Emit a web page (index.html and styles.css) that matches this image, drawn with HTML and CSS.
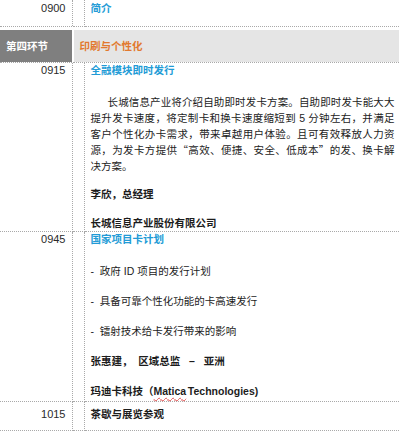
FILE: index.html
```html
<!DOCTYPE html>
<html lang="zh-CN">
<head>
<meta charset="utf-8">
<title>议程</title>
<link rel="stylesheet" href="styles.css">
</head>
<body>
<table class="agenda">
  <colgroup><col class="c-time"><col class="c-gap"><col class="c-main"></colgroup>
  <tr class="r-intro">
    <td class="time">0900</td>
    <td class="gap"></td>
    <td class="main"><div class="title blue">简介</div></td>
  </tr>
  <tr class="r-head">
    <td class="head head-time"><div class="band dark">第四环节</div></td>
    <td class="head head-main" colspan="2"><div class="band light">印刷与个性化</div></td>
  </tr>
  <tr class="r-session">
    <td class="time">0915</td>
    <td class="gap"></td>
    <td class="main">
      <div class="title blue">全融模块即时发行</div>
      <div class="para">
        <span class="ln first">长城信息产业将介绍自助即时发卡方案。自助即时发卡能大大</span>
        <span class="ln">提升发卡速度，将定制卡和换卡速度缩短到 5 分钟左右，并满足</span>
        <span class="ln">客户个性化办卡需求，带来卓越用户体验。且可有效释放人力资</span>
        <span class="ln">源，为发卡方提供<span class="q">“</span>高效、便捷、安全、低成本<span class="q">”</span>的发、换卡解</span>
        <span class="ln-last">决方案。</span>
      </div>
      <div class="line bold m13">李欣，总经理</div>
      <div class="line bold m15">长城信息产业股份有限公司</div>
    </td>
  </tr>
  <tr class="r-session2">
    <td class="time">0945</td>
    <td class="gap"></td>
    <td class="main">
      <div class="title blue">国家项目卡计划</div>
      <div class="line m18">-&nbsp; 政府 ID 项目的发行计划</div>
      <div class="line m16">-&nbsp; 具备可靠个性化功能的卡高速发行</div>
      <div class="line m16">-&nbsp; 镭射技术给卡发行带来的影响</div>
      <div class="line bold m16">张惠建，&nbsp; 区域总监 &nbsp;&nbsp;–&nbsp;&nbsp; 亚洲</div>
      <div class="line bold m16">玛迪卡科技（<span class="spell">Matica</span><span class="thin"> </span>Technologies)</div>
    </td>
  </tr>
  <tr class="r-break">
    <td class="time">1015</td>
    <td class="gap"></td>
    <td class="main"><div class="line bold">茶歇与展览参观</div></td>
  </tr>
</table>
</body>
</html>
```

FILE: styles.css
```css
* { box-sizing: border-box; }
html, body { margin: 0; background: #fff; }
body {
  width: 400px;
  overflow: hidden;
  font-family: "Liberation Sans", "Noto Sans CJK SC", sans-serif;
  font-size: 10.5px;
  color: #1c1c1c;
}
.agenda {
  border-collapse: collapse;
  table-layout: fixed;
  width: 400px;
}
.c-time { width: 72px; }
.c-gap { width: 12px; }
.c-main { width: 316px; }

td {
  padding: 0;
  vertical-align: top;
  border: 1px dotted #a9a9a9;
  line-height: 14px;
}
td:first-child { border-left: none; }
.r-intro td { border-top: none; }

.time {
  text-align: right;
  padding-right: 6px;
  color: #2a2a2a;
  font-size: 11px;
}
.main { padding: 0 5px 0 6px; }

.r-intro td { padding-top: 1px; padding-bottom: 11px; }
.r-session td.main { padding-bottom: 1px; }
.r-session2 td.main { padding-bottom: 1px; }
.r-break td { padding-top: 5px; padding-bottom: 9px; }

.head { padding-top: 3px; }
.head-main { border-left: 1px solid #fff; }
.band {
  height: 32px;
  line-height: 32px;
  font-weight: bold;
}
.dark { background: #7f7f7f; color: #fff; padding-left: 6px; }
.light { background: #e5e5e5; color: #e2792e; padding-left: 6px; margin: 0 1px; }

.title { font-weight: bold; line-height: 14px; }
.blue { color: #229bd6; }
.line { line-height: 14px; }
.bold { font-weight: bold; }
.m13 { margin-top: 13px; }
.m15 { margin-top: 15px; }
.m16 { margin-top: 16px; }
.m18 { margin-top: 18px; }

.para { margin-top: 17px; line-height: 16px; }
.ln { display: block; text-align: justify; text-align-last: justify; }
.ln.first { text-indent: 17px; }
.ln-last { display: block; }
.q { font-family: "Noto Sans CJK SC", sans-serif; }

.thin { font-size: 6px; }
.spell {
  text-decoration: underline wavy #e05050;
  text-decoration-thickness: 1px;
  text-underline-offset: 2px;
}
```
